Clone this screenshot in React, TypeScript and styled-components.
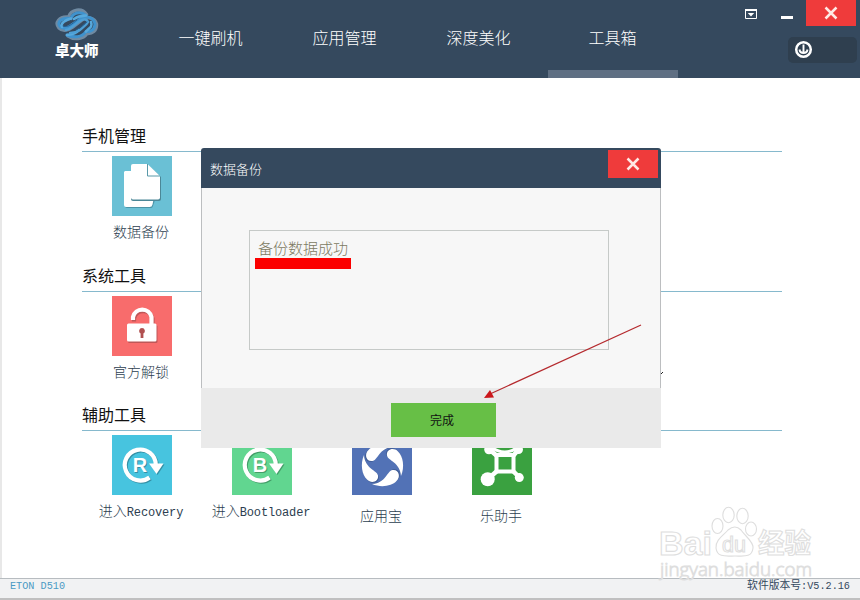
import React from "react";
import styled, { createGlobalStyle } from "styled-components";

const GlobalStyle = createGlobalStyle`
  * { box-sizing: border-box; }
  body { margin: 0; overflow: hidden; }
  svg { display: block; }
`;

const sans = `"Noto Sans CJK SC", sans-serif`;
const mono = `"Liberation Mono", "Noto Sans CJK SC", monospace`;

const Window = styled.div`
  position: relative;
  width: 860px;
  height: 600px;
  display: flex;
  flex-direction: column;
  overflow: hidden;
  background: #fff;
  font-family: ${sans};
  font-weight: 300;
`;

const Header = styled.header`
  flex: none;
  height: 78px;
  display: flex;
  background: #35495e;
`;

const Brand = styled.div`
  width: 146px;
  padding: 8px 0 0 55px;
  color: #fff;
`;

const BrandName = styled.div`
  margin-top: -2px;
  font-size: 14.5px;
  line-height: 20px;
  font-weight: 900;
  white-space: nowrap;
`;

const Nav = styled.nav`
  display: flex;
  gap: 4px;
`;

const NavItem = styled.a<{ $active?: boolean }>`
  width: 130px;
  height: 78px;
  padding: 25px 1px 0 0;
  font-size: 16px;
  line-height: 24px;
  text-align: center;
  color: #fff;
  border-bottom: 8px solid ${(p) => (p.$active ? "#5f6f83" : "transparent")};
`;

const HeaderTools = styled.div`
  margin-left: auto;
  display: flex;
  flex-direction: column;
  align-items: flex-end;
  padding-right: 3px;
`;

const WindowButtons = styled.div`
  display: flex;
  align-items: flex-start;
  height: 26px;
  margin-right: 1px;
`;

const IconButton = styled.button<{ $w: number; $top: number }>`
  display: flex;
  align-items: flex-start;
  justify-content: flex-start;
  width: ${(p) => p.$w}px;
  height: 26px;
  padding: ${(p) => p.$top}px 0 0;
  border: 0;
  background: none;
`;

const CloseButton = styled.button<{ $h: number }>`
  flex: none;
  display: flex;
  align-items: center;
  justify-content: center;
  width: 50px;
  height: ${(p) => p.$h}px;
  padding: 0 1px 1px 0;
  border: 0;
  background: #ef3b3b;
`;

const DownloadPill = styled.div`
  width: 69px;
  height: 26px;
  margin-top: 11px;
  padding: 3px 6px;
  border-radius: 5px;
  background: #2f3f4f;
`;

const Main = styled.main`
  flex: 1;
  padding: 45px 0 0 80px;
  border-left: 2px solid #e8e8e8;
`;

const Section = styled.section<{ $h: number }>`
  width: 700px;
  height: ${(p) => p.$h}px;
`;

const SectionTitle = styled.h2`
  height: 29px;
  margin: 0;
  font-size: 16px;
  line-height: 25px;
  font-weight: 400;
  color: #111;
  border-bottom: 1px solid #86b9cd;
`;

const Tiles = styled.div`
  display: flex;
  padding-top: 4px;
`;

const Tile = styled.div`
  width: 120px;
  display: flex;
  flex-direction: column;
  align-items: center;
`;

const TileIcon = styled.div<{ $bg: string }>`
  width: 60px;
  height: 60px;
  background: ${(p) => p.$bg};
`;

const TileLabel = styled.span<{ $gap?: number }>`
  margin-top: ${(p) => p.$gap ?? 5}px;
  padding-right: 2px;
  font-size: 14px;
  line-height: 20px;
  color: #2c3e50;
  white-space: nowrap;
`;

const Latin = styled.span`
  font-family: ${mono};
  font-size: 12px;
  letter-spacing: -0.15px;
  font-weight: 400;
`;

const StatusBar = styled.footer`
  flex: none;
  height: 22px;
  display: flex;
  justify-content: space-between;
  padding: 0 10px;
  background: #f1f2f3;
  border-top: 1px solid #b7bcc0;
  border-bottom: 2px solid #c0c0c0;
  font-family: ${mono};
  font-size: 10.2px;
  line-height: 15px;
  color: #34495e;
`;

const Device = styled.span`
  color: #4b9ac4;
`;

const Version = styled.span`
  margin-top: -2px;
`;

const VersionLabel = styled.span`
  font-family: ${sans};
  font-size: 10.8px;
  font-weight: 400;
`;

const Dialog = styled.div`
  position: absolute;
  left: 201px;
  top: 148px;
  width: 460px;
  height: 300px;
  display: flex;
  flex-direction: column;
  border-radius: 3px 3px 0 0;
  overflow: hidden;
`;

const DialogHeader = styled.div`
  flex: none;
  height: 40px;
  display: flex;
  justify-content: space-between;
  align-items: flex-start;
  padding: 2px 3px 0 9px;
  background: #35495e;
`;

const DialogTitle = styled.span`
  padding-top: 9px;
  font-size: 13px;
  line-height: 20px;
  color: #fff;
`;

const DialogBody = styled.div`
  flex: 1;
  padding: 42px 51px 38px 47px;
  background: #f7f7f7;
  border: solid #bcbec0;
  border-width: 0 1px;
`;

const MessageBox = styled.div`
  width: 360px;
  height: 120px;
  padding: 8px 5px;
  border: 1px solid #c6cac8;
`;

const Message = styled.div`
  height: 19px;
  padding-left: 3px;
  font-size: 15px;
  line-height: 18px;
  color: #7d7a62;
`;

const Highlight = styled.div`
  width: 96px;
  height: 11px;
  background: #fb0000;
`;

const DialogFooter = styled.div`
  flex: none;
  height: 60px;
  padding: 15px 0 0 190px;
  background: #eaeaea;
`;

const DoneButton = styled.button`
  display: block;
  width: 105px;
  height: 34px;
  padding: 0 3px 2px 0;
  border: 0;
  background: #67bf46;
  font-family: ${sans};
  font-size: 12px;
  color: #111;
`;

const Annotation = styled.svg`
  position: absolute;
  left: 480px;
  top: 320px;
`;

const Fragment = styled.svg`
  position: absolute;
  left: 661px;
  top: 371px;
`;

const Watermark = styled.svg`
  position: absolute;
  left: 650px;
  top: 500px;
`;

const CloudLogo = () => (
  <svg width="44" height="34" viewBox="55 8 44 34" fill="none" strokeLinecap="round">
    <path d="M86.5 14.5C82 7.5 71 9 68.5 17C59 16 54.5 23 59 28C63 32 69 30 73 27L82 20C87 15.500 95 18 96.500 24C97 31 92 34 87 33.500C83 39.500 74 40 68 36" stroke="#6f8aa2" strokeWidth="3.4" />
    <path d="M86 15.500C80 10.500 73 13 71 18.500C61 17 56 23 60.500 27C65 30 69 27 73 24L81 18.500C87 15 94 18 95 24C95 30 90 32 86 31.500C82 37.500 74 38 67 35" stroke="#3f92cd" strokeWidth="3" />
    <path d="M71 18.500C66 20 60 23 62 27M86 15.500C80 16 78 16 74 19M86 31.500C89 28 93 27 91 22M67 35C74 34 76 33 79 30" stroke="#57a9dc" strokeWidth="2.600" />
    <path d="M66 30C71 29 75 24 80 21C84 18.500 87 19 88 22C86 26 83 27 80 30C77 32 74 33 70 33" stroke="#4d9fd5" strokeWidth="2.400" />
    <path d="M63 26C68 28 72 24 77 20M76 30C81 28 82 25 87 22" stroke="#235f91" strokeWidth=".9" />
  </svg>
);

const CloseGlyph = () => (
  <svg width="14" height="14" viewBox="0 0 14 14" stroke="#ffe9e5" strokeWidth="2.5">
    <path d="M1.5 1.5L12.5 12.5M12.5 1.5L1.5 12.5" />
  </svg>
);

const FilesIcon = () => (
  <svg width="60" height="60" viewBox="0 0 60 60">
    <path d="M14 16h21v28h8l-2 6q-.5 2-2 2H15q-2 0-2-2z" fill="#4b94a7" />
    <path d="M13 15h22v26h7l-1.500 7.500q-.5 2.500-3 2.500H14q-2 0-2-2V16z" fill="#fff" />
    <path d="M21 9h15l13 12v22q0 2-2 2H21q-2 0-2-2V11z" fill="#4b8797" />
    <path d="M21 8h14.500L48 20v21.500q0 2-2 2H21q-2 0-2-2V10q0-2 2-2z" fill="#fff" />
    <path d="M35.500 8v12H48" fill="none" stroke="#5999a9" strokeWidth="1" />
  </svg>
);

const LockBody = ({ color }: { color: string }) => (
  <g>
    <path d="M21 24v-3a9.5 9.5 0 0 1 18.500 0v8" fill="none" stroke={color} strokeWidth="4.200" />
    <rect x="15" y="27.500" width="29.500" height="18" rx="1.5" fill={color} />
  </g>
);

const UnlockIcon = () => (
  <svg width="60" height="60" viewBox="0 0 60 60">
    <g transform="translate(1 1.5)"><LockBody color="#be5758" /></g>
    <LockBody color="#fff" />
    <path d="M30 32a3 3 0 0 1 1.4 5.6V42h-2.8v-4.4A3 3 0 0 1 30 32z" fill="#b05050" />
  </svg>
);

const CycleShape = ({ letter, color }: { letter: string; color: string }) => (
  <g>
    <path d="M37.500 42.500A15.500 15.500 0 1 1 43.800 30" fill="none" stroke={color} strokeWidth="4.200" />
    <path d="M37 28.500h14.500l-7 10.500z" fill={color} />
    <text x="28" y="36.5" textAnchor="middle" fontFamily="Liberation Sans, sans-serif" fontWeight="700" fontSize="20" fill={color}>{letter}</text>
  </g>
);

const CycleIcon = ({ letter, shade }: { letter: string; shade: string }) => (
  <svg width="60" height="60" viewBox="0 0 60 60">
    <g transform="translate(1 1)"><CycleShape letter={letter} color={shade} /></g>
    <CycleShape letter={letter} color="#fff" />
  </svg>
);

const drop = "M12 20C8 29 10 40 15 44.500C19 49 27 47 26 40.500C25 35 13 34 12 20Z";

const DropsIcon = () => (
  <svg width="60" height="60" viewBox="0 0 60 60">
    {[0, 90, 180, 270].map((angle) => (
      <g key={angle} transform={`rotate(${angle} 30.5 30.5)`}>
        <path d={drop} fill="#3e5a91" transform="translate(.7 .9)" />
        <path d={drop} fill="#fff" />
      </g>
    ))}
  </svg>
);

const DroneIcon = () => (
  <svg width="60" height="60" viewBox="0 0 60 60" fill="none" stroke="#fff">
    <rect x="24.500" y="20" width="17" height="16.500" rx="1" strokeWidth="4" />
    <path d="M25 21L17 14M41 21L47 14M25 36L16 44M41 36L47 42" strokeWidth="4.500" />
    <path d="M19 12Q33 22 46 12" strokeWidth="3" />
    <circle cx="15.700" cy="44.300" r="7" fill="#fff" stroke="none" />
    <circle cx="47.300" cy="42.600" r="4.500" fill="#fff" stroke="none" />
    <circle cx="17" cy="14.500" r="4.800" fill="#fff" stroke="none" />
    <circle cx="46.500" cy="14.500" r="4.500" fill="#fff" stroke="none" />
  </svg>
);

export default function App() {
  return (
    <Window>
      <GlobalStyle />
      <Header>
        <Brand>
          <CloudLogo />
          <BrandName>卓大师</BrandName>
        </Brand>
        <Nav>
          <NavItem>一键刷机</NavItem>
          <NavItem>应用管理</NavItem>
          <NavItem>深度美化</NavItem>
          <NavItem $active>工具箱</NavItem>
        </Nav>
        <HeaderTools>
          <WindowButtons>
            <IconButton $w={36} $top={9}>
              <svg width="12" height="10" viewBox="0 0 12 10">
                <path d="M.5 1h11v8.5H.5z" fill="none" stroke="#fff" />
                <path d="M0 0h12v2H0zM2.800 4h6.4L6 7.500z" fill="#fff" />
              </svg>
            </IconButton>
            <IconButton $w={25} $top={16}>
              <svg width="12" height="3"><rect width="12" height="3" fill="#fff" /></svg>
            </IconButton>
            <CloseButton $h={26}><CloseGlyph /></CloseButton>
          </WindowButtons>
          <DownloadPill>
            <svg width="19" height="19" viewBox="0 0 19 19" fill="none" stroke="#fff">
              <circle cx="9.5" cy="9.5" r="7.3" strokeWidth="2.5" />
              <path d="M9.5 4.5v9M5.5 9.5Q6 13 9.5 13T13.5 9.5" strokeWidth="1.9" />
            </svg>
          </DownloadPill>
        </HeaderTools>
      </Header>

      <Main>
        <Section $h={140}>
          <SectionTitle>手机管理</SectionTitle>
          <Tiles>
            <Tile>
              <TileIcon $bg="#6ac0d5"><FilesIcon /></TileIcon>
              <TileLabel>数据备份</TileLabel>
            </Tile>
          </Tiles>
        </Section>
        <Section $h={139}>
          <SectionTitle>系统工具</SectionTitle>
          <Tiles>
            <Tile>
              <TileIcon $bg="#f86c6c"><UnlockIcon /></TileIcon>
              <TileLabel>官方解锁</TileLabel>
            </Tile>
          </Tiles>
        </Section>
        <Section $h={140}>
          <SectionTitle>辅助工具</SectionTitle>
          <Tiles>
            <Tile>
              <TileIcon $bg="#47c4df"><CycleIcon letter="R" shade="#358fa5" /></TileIcon>
              <TileLabel>进入<Latin>Recovery</Latin></TileLabel>
            </Tile>
            <Tile>
              <TileIcon $bg="#61d690"><CycleIcon letter="B" shade="#449d69" /></TileIcon>
              <TileLabel>进入<Latin>Bootloader</Latin></TileLabel>
            </Tile>
            <Tile>
              <TileIcon $bg="#5272b6"><DropsIcon /></TileIcon>
              <TileLabel $gap={10}>应用宝</TileLabel>
            </Tile>
            <Tile>
              <TileIcon $bg="#3aa140"><DroneIcon /></TileIcon>
              <TileLabel $gap={10}>乐助手</TileLabel>
            </Tile>
          </Tiles>
        </Section>
      </Main>

      <StatusBar>
        <Device>ETON D510</Device>
        <Version><VersionLabel>软件版本号</VersionLabel>:V5.2.16</Version>
      </StatusBar>

      <Dialog>
        <DialogHeader>
          <DialogTitle>数据备份</DialogTitle>
          <CloseButton $h={28}><CloseGlyph /></CloseButton>
        </DialogHeader>
        <DialogBody>
          <MessageBox>
            <Message>备份数据成功</Message>
            <Highlight />
          </MessageBox>
        </DialogBody>
        <DialogFooter>
          <DoneButton>完成</DoneButton>
        </DialogFooter>
      </Dialog>

      <Fragment width="3" height="4"><path d="M2 1L0 3" stroke="#222" /></Fragment>

      <Annotation width="166" height="82" viewBox="480 320 166 82">
        <path d="M641 325L490 394" stroke="#b52a2e" strokeWidth="1.2" />
        <path d="M484 398L490 390L494 397.5Z" fill="#cb171b" />
      </Annotation>

      <Watermark width="170" height="82" viewBox="650 500 170 82" fill="#fff" stroke="#dedede" strokeWidth="1.1">
        <text x="659" y="555" fontFamily="Liberation Sans, sans-serif" fontWeight="700" fontSize="34" textLength="53" lengthAdjust="spacingAndGlyphs">Bai</text>
        <ellipse cx="717.5" cy="526" rx="5.5" ry="7.5" />
        <ellipse cx="728.5" cy="515" rx="5.7" ry="7.7" />
        <ellipse cx="742.5" cy="516" rx="5.7" ry="7.7" />
        <ellipse cx="751" cy="529" rx="5.5" ry="7" />
        <path d="M716 548C715 540 724 535 728 530Q735 524 741 530C745 536 754 542 753 548C752 558 743 556 735 556S717 558 716 548Z" />
        <text x="722" y="552" fontFamily="Liberation Sans, sans-serif" fontSize="22" textLength="24" lengthAdjust="spacingAndGlyphs">du</text>
        <text x="758" y="553" fontFamily="Noto Sans CJK SC, sans-serif" fontWeight="700" fontSize="27" textLength="53" lengthAdjust="spacingAndGlyphs">经验</text>
        <text x="660" y="576" fontFamily="Open Sans, sans-serif" fontSize="18" textLength="152" lengthAdjust="spacingAndGlyphs" strokeWidth="0.9">jingyan.baidu.com</text>
      </Watermark>
    </Window>
  );
}
